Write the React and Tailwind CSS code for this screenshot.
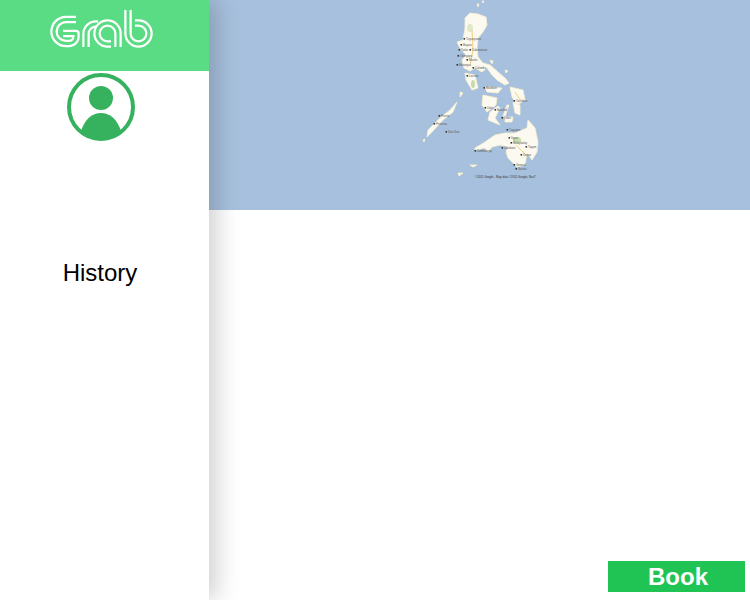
import React from 'react';

const land = [
  '465,18 470,13 478,14 486,17 487,25 483,32 478,38 477,48 478,57 483,63 490,65 498,72 505,78 509,83 505,85 497,80 492,75 487,68 482,72 475,68 470,71 464,68 462,60 466,55 460,48 457,42 463,40 465,28',
  '465,73 475,75 478,88 472,90 466,80',
  '485,87 502,88 498,93 487,92',
  '510,87 523,90 525,100 517,105 512,97',
  '513,102 520,105 520,115 515,113',
  '483,95 497,98 496,105 487,112 482,105',
  '500,108 495,118 500,125 488,120 490,112 498,106',
  '509,105 505,117 503,116 507,105',
  '505,117 513,117 512,122 505,122',
  '457,102 453,112 443,120 432,132 427,137 428,130 440,118 450,110',
  '460,92 463,93 460,97',
  '475,148 485,142 495,135 505,133 515,133 527,128 528,120 535,128 538,142 537,152 532,160 527,153 525,165 517,167 508,158 506,152 508,147 500,145 492,147 488,152 485,148 475,150',
  '470,165 477,165 473,167',
  '458,173 463,173 459,176',
  '477,4 479,4 478,7',
  '482,1 484,1 483,3',
  '490,60 493,61 492,64',
  '505,70 508,71 506,73',
  '423,140 425,139 424,142',
];

const places = [
  [466, 39, 'Tuguegarao'],
  [463, 45, 'Baguio'],
  [461, 50, 'Tarlac'],
  [472, 50, 'Cabanatuan'],
  [460, 56, 'Olongapo'],
  [469, 60, 'Manila'],
  [459, 65, 'Batangas'],
  [475, 68, 'Calamba'],
  [469, 76, 'Lucena'],
  [486, 88, 'Masbate'],
  [516, 101, 'Tacloban'],
  [487, 108, 'Iloilo'],
  [497, 110, 'Bacolod'],
  [504, 118, 'Cebu'],
  [441, 116, 'Puerto'],
  [436, 124, 'Princesa'],
  [448, 132, 'Sulu Sea'],
  [509, 130, 'Cagayan'],
  [511, 138, 'Iligan'],
  [513, 143, 'Malaybalay'],
  [504, 148, 'Cotabato'],
  [477, 151, 'Zamboanga'],
  [528, 147, 'Tagum'],
  [523, 155, 'Davao'],
  [516, 165, 'General'],
  [518, 169, 'Santos'],
];

const letters = [
  'M76 19.5 H66 A12 12 0 0 0 66 43.5 H69 A7 7 0 0 0 76 36.5 V33.5 H63',
  'M86 47 V34 A10 10 0 0 1 96 24 H98',
  'M118 47 V33.5 A10.5 10.5 0 1 0 107.5 44 H111',
  'M128 10 V33.5 A10.5 10.5 0 1 0 138.5 23 H135',
];

function GrabLogo() {
  return (
    <svg width="110" height="44" viewBox="46 8 110 44" fill="none" strokeLinejoin="round">
      {letters.map((d) => (
        <g key={d}>
          <path d={d} stroke="#ffffff" strokeWidth="7.5" />
          <path d={d} stroke="#5adc84" strokeWidth="3" />
        </g>
      ))}
    </svg>
  );
}

function Avatar() {
  return (
    <svg width="70" height="70" viewBox="0 0 70 70" className="block">
      <circle cx="35" cy="35" r="32" fill="#ffffff" stroke="#36b25f" strokeWidth="4" />
      <circle cx="35" cy="26" r="12" fill="#36b25f" />
      <path d="M15 59 C19 47 26 41 35 41 C44 41 51 47 55 59 A30 30 0 0 1 15 59 Z" fill="#36b25f" />
    </svg>
  );
}

function PhilippinesMap() {
  return (
    <svg width="140" height="190" viewBox="410 0 140 190" className="block">
      <defs>
        <filter id="soft">
          <feGaussianBlur stdDeviation="0.6" />
        </filter>
      </defs>
      <g filter="url(#soft)">
        {land.map((points) => (
          <polygon key={points} points={points} fill="#fbf9f0" stroke="#faf0cc" strokeWidth="0.8" />
        ))}
        <ellipse cx="473" cy="84" rx="2" ry="4" fill="#c6dcae" />
        <ellipse cx="470" cy="28" rx="3" ry="4" fill="#dfe8c8" />
        <ellipse cx="517" cy="140" rx="4" ry="3" fill="#c6dcae" />
        <path d="M472 30 L473 50 L470 66 M516 145 L526 155 M515 92 L520 100" stroke="#f2cf7e" strokeWidth="1" fill="none" />
      </g>
      {places.map(([x, y, name]) => (
        <g key={name}>
          <rect x={x - 2.5} y={y - 1} width="1.6" height="1.6" fill="#333333" />
          <text x={x} y={y + 0.8} fontSize="2.8" fill="#555555" fontFamily="Liberation Sans, sans-serif">
            {name}
          </text>
        </g>
      ))}
      <text x="475" y="178" fontSize="2.9" fill="#333333" fontFamily="Liberation Sans, sans-serif">
        ©2011 Google - Map data ©2011 Google, NavT
      </text>
    </svg>
  );
}

export default function App() {
  return (
    <div className="flex h-[600px] w-[750px] overflow-hidden bg-white font-['Liberation_Sans',Arial,sans-serif]">
      <aside className="relative z-10 flex w-[209px] shrink-0 flex-col items-center bg-white shadow-[8px_0_22px_rgba(0,0,0,0.18)]">
        <header className="flex h-[71px] w-full justify-center bg-[#5adc84] pt-2 pr-[7px]">
          <GrabLogo />
        </header>
        <div className="mt-[1px] mr-[7px]">
          <Avatar />
        </div>
        <p className="mt-[117px] mr-[9px] text-[24px] leading-[28px] text-black">History</p>
      </aside>

      <main className="flex min-w-0 flex-1 flex-col">
        <div className="flex h-[210px] justify-center bg-[#a7c0dd]">
          <div className="ml-[1px]">
            <PhilippinesMap />
          </div>
        </div>
        <div className="flex flex-1 items-end justify-end pr-[5px] pb-2">
          <button className="h-[31px] w-[137px] bg-[#1fc455] pl-[3px] text-center text-[24px] leading-[31px] font-bold text-white">
            Book
          </button>
        </div>
      </main>
    </div>
  );
}
